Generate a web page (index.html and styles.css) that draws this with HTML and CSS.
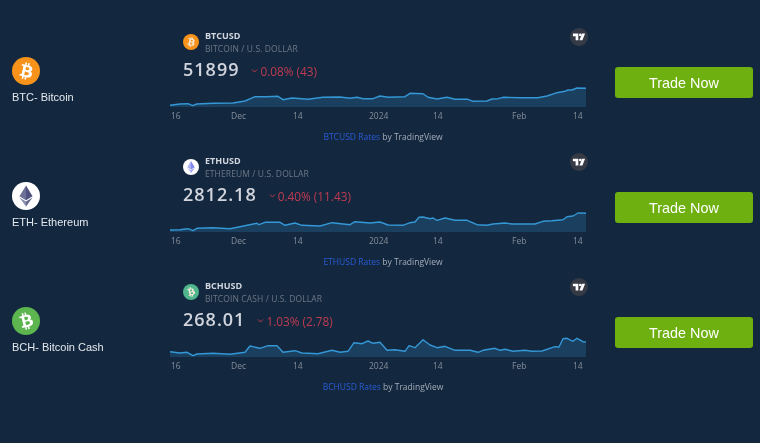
FILE: index.html
```html
<!DOCTYPE html>
<html lang="en">
<head>
<meta charset="utf-8">
<title>Trade Now</title>
<link rel="stylesheet" href="styles.css">
</head>
<body>
<svg class="defs" width="0" height="0" aria-hidden="true">
  <defs>
    <path id="btc" d="M23.189 14.02c.314-2.096-1.283-3.223-3.465-3.975l.708-2.84-1.728-.43-.69 2.765c-.454-.114-.92-.22-1.385-.326l.695-2.783L15.596 6l-.708 2.839c-.376-.086-.746-.17-1.104-.26l.002-.009-2.384-.595-.46 1.846s1.283.294 1.256.312c.7.175.826.638.805 1.006l-.806 3.235c.048.012.11.03.18.057l-.183-.045-1.13 4.532c-.086.212-.303.531-.793.41.018.025-1.256-.313-1.256-.313l-.858 1.978 2.25.561c.418.105.828.215 1.231.318l-.715 2.872 1.727.43.708-2.84c.472.127.93.245 1.378.357l-.706 2.828 1.728.43.715-2.866c2.948.558 5.164.333 6.097-2.333.752-2.146-.037-3.385-1.588-4.192 1.13-.26 1.98-1.003 2.207-2.538zm-3.95 5.538c-.533 2.147-4.148.986-5.32.695l.95-3.805c1.172.293 4.929.872 4.37 3.11zm.535-5.569c-.487 1.953-3.495.96-4.47.717l.86-3.45c.975.243 4.118.696 3.61 2.733z"/>
    <g id="eth">
      <path class="eth-a" d="M16 4 8.5 16.3 16 20.8z"/>
      <path class="eth-b" d="M16 4l7.5 12.3L16 20.8z"/>
      <path class="eth-c" d="M8.5 17.8 16 28v-5.8z"/>
      <path class="eth-d" d="M23.5 17.8 16 28v-5.8z"/>
    </g>
    <g id="tv">
      <path d="M14 6H2v6h6v9h6z"/>
      <circle cx="18.5" cy="9" r="3"/>
      <path d="M22.5 6H29l-6 15h-6.5z"/>
    </g>
    <path id="chev" d="M1 1.5 3.5 4 6 1.5"/>
    <g id="axis">
      <text x="171" y="119">16</text>
      <text x="231" y="119">Dec</text>
      <text x="293" y="119">14</text>
      <text x="369" y="119">2024</text>
      <text x="433" y="119">14</text>
      <text x="512" y="119">Feb</text>
      <text x="573" y="119">14</text>
    </g>
  </defs>
</svg>

<main class="list">
  <section class="row">
    <div class="coin">
      <svg class="coin-icon" viewBox="0 0 32 32"><circle class="c-btc" cx="16" cy="16" r="16"/><use class="glyph" href="#btc"/></svg>
      <p class="coin-name">BTC- Bitcoin</p>
    </div>
    <div class="widget">
      <div class="head">
        <svg class="mini-icon" viewBox="0 0 32 32"><circle class="c-btc" cx="16" cy="16" r="16"/><use class="glyph-soft" href="#btc"/></svg>
        <div>
          <div class="symbol">BTCUSD</div>
          <div class="pair">BITCOIN / U.S. DOLLAR</div>
        </div>
      </div>
      <svg class="tv" viewBox="-4.5 -6.5 40 40"><circle class="tv-bg" cx="15.5" cy="13.5" r="20"/><use class="tv-mark" href="#tv"/></svg>
      <div class="quote">
        <span class="price">51899</span>
        <svg class="chev" viewBox="0 0 7 5"><use href="#chev"/></svg>
        <span class="change">0.08% (43)</span>
      </div>
      <svg class="chart" viewBox="170 80 416 42">
        <polygon class="area" points="170,107 170,105.3 180,104 188,103.7 192.7,105.7 196.7,104 213,103.3 233,103 245,101 255,96.7 266.7,96.7 278,96.3 283,99.7 292,98 308,99.3 323,97.3 340,97 350,98.3 357,97.3 363,98.7 373,98.7 380,96 388,97.3 405,96.7 410,93.3 423,93.7 428,97.3 437,99 447,97.3 455,99.3 468,99.3 473,101.3 487,101 492,99 498,98.7 503,97.3 520,97.7 538,97.7 547,96 557,92.7 565,91.3 568,90 572,90 577,88 586,88.3 586,107"/>
        <polyline class="line" points="170,105.3 180,104 188,103.7 192.7,105.7 196.7,104 213,103.3 233,103 245,101 255,96.7 266.7,96.7 278,96.3 283,99.7 292,98 308,99.3 323,97.3 340,97 350,98.3 357,97.3 363,98.7 373,98.7 380,96 388,97.3 405,96.7 410,93.3 423,93.7 428,97.3 437,99 447,97.3 455,99.3 468,99.3 473,101.3 487,101 492,99 498,98.7 503,97.3 520,97.7 538,97.7 547,96 557,92.7 565,91.3 568,90 572,90 577,88 586,88.3"/>
        <use class="axis" href="#axis"/>
      </svg>
      <p class="credit"><a class="credit-link" href="#">BTCUSD Rates</a> by TradingView</p>
    </div>
    <a class="trade" href="#">Trade Now</a>
  </section>

  <section class="row">
    <div class="coin">
      <svg class="coin-icon" viewBox="0 0 32 32"><circle class="c-white" cx="16" cy="16" r="16"/><use class="eth-dark" href="#eth"/></svg>
      <p class="coin-name">ETH- Ethereum</p>
    </div>
    <div class="widget">
      <div class="head">
        <svg class="mini-icon" viewBox="0 0 32 32"><circle class="c-white" cx="16" cy="16" r="16"/><use class="eth-light" href="#eth"/></svg>
        <div>
          <div class="symbol">ETHUSD</div>
          <div class="pair">ETHEREUM / U.S. DOLLAR</div>
        </div>
      </div>
      <svg class="tv" viewBox="-4.5 -6.5 40 40"><circle class="tv-bg" cx="15.5" cy="13.5" r="20"/><use class="tv-mark" href="#tv"/></svg>
      <div class="quote">
        <span class="price">2812.18</span>
        <svg class="chev" viewBox="0 0 7 5"><use href="#chev"/></svg>
        <span class="change">0.40% (11.43)</span>
      </div>
      <svg class="chart" viewBox="170 80 416 42">
        <polygon class="area" points="170,107 170,105 180,104.7 188,103.7 193,105.7 197,103.3 213,102.7 230,103.7 240,101.7 257,98.3 259,99.7 265,97.3 280,97.3 285,100.3 295,98 302,100.3 320,101 332,97.7 350,99.7 355,96.7 370,98 380,97 388,100 403,100.3 410,97.7 415,97 419,92.3 423,92 430,93.7 433,93 437,95.3 445,93 455,95.3 467,95.3 477,99.7 487,100.3 493,99 505,98 512,99 535,99 543,96.3 552,95.7 563,94.7 567,91.7 573,91 578,88 586,88.3 586,107"/>
        <polyline class="line" points="170,105 180,104.7 188,103.7 193,105.7 197,103.3 213,102.7 230,103.7 240,101.7 257,98.3 259,99.7 265,97.3 280,97.3 285,100.3 295,98 302,100.3 320,101 332,97.7 350,99.7 355,96.7 370,98 380,97 388,100 403,100.3 410,97.7 415,97 419,92.3 423,92 430,93.7 433,93 437,95.3 445,93 455,95.3 467,95.3 477,99.7 487,100.3 493,99 505,98 512,99 535,99 543,96.3 552,95.7 563,94.7 567,91.7 573,91 578,88 586,88.3"/>
        <use class="axis" href="#axis"/>
      </svg>
      <p class="credit"><a class="credit-link" href="#">ETHUSD Rates</a> by TradingView</p>
    </div>
    <a class="trade" href="#">Trade Now</a>
  </section>

  <section class="row">
    <div class="coin">
      <svg class="coin-icon" viewBox="0 0 32 32"><circle class="c-bch" cx="16" cy="16" r="16"/><use class="glyph tilt" href="#btc"/></svg>
      <p class="coin-name">BCH- Bitcoin Cash</p>
    </div>
    <div class="widget">
      <div class="head">
        <svg class="mini-icon" viewBox="0 0 32 32"><circle class="c-bch-soft" cx="16" cy="16" r="16"/><use class="glyph-soft tilt" href="#btc"/></svg>
        <div>
          <div class="symbol">BCHUSD</div>
          <div class="pair">BITCOIN CASH / U.S. DOLLAR</div>
        </div>
      </div>
      <svg class="tv" viewBox="-4.5 -6.5 40 40"><circle class="tv-bg" cx="15.5" cy="13.5" r="20"/><use class="tv-mark" href="#tv"/></svg>
      <div class="quote">
        <span class="price">268.01</span>
        <svg class="chev" viewBox="0 0 7 5"><use href="#chev"/></svg>
        <span class="change">1.03% (2.78)</span>
      </div>
      <svg class="chart" viewBox="170 80 416 42">
        <polygon class="area" points="170,107 170,101.7 180,103 187,102.3 193,105.7 197,104 213,103.3 230,104.3 245,102.3 250,96 260,98.3 268,95.7 277,95.7 283,102.3 295,100.7 302,103 318,103.7 332,100.3 340,102.3 348,101.3 354,92.7 362,93.7 368,91 373,93.3 380,92.3 387,100.3 395,99.7 405,101.3 409,95.7 415,97.7 423,89.7 430,95 437,97.7 445,96.3 455,100.3 470,100.3 478,102.3 483,100.3 495,98.3 500,100.3 505,99.3 513,101.3 525,100.3 532,101.3 542,101 555,96.7 559,97 563,88.7 567,88.3 573,91.3 577,88.3 583,91.7 586,92 586,107"/>
        <polyline class="line" points="170,101.7 180,103 187,102.3 193,105.7 197,104 213,103.3 230,104.3 245,102.3 250,96 260,98.3 268,95.7 277,95.7 283,102.3 295,100.7 302,103 318,103.7 332,100.3 340,102.3 348,101.3 354,92.7 362,93.7 368,91 373,93.3 380,92.3 387,100.3 395,99.7 405,101.3 409,95.7 415,97.7 423,89.7 430,95 437,97.7 445,96.3 455,100.3 470,100.3 478,102.3 483,100.3 495,98.3 500,100.3 505,99.3 513,101.3 525,100.3 532,101.3 542,101 555,96.7 559,97 563,88.7 567,88.3 573,91.3 577,88.3 583,91.7 586,92"/>
        <use class="axis" href="#axis"/>
      </svg>
      <p class="credit"><a class="credit-link" href="#">BCHUSD Rates</a> by TradingView</p>
    </div>
    <a class="trade" href="#">Trade Now</a>
  </section>
</main>
</body>
</html>
```
FILE: styles.css
```css
* { box-sizing: border-box; }

html, body {
  margin: 0;
  height: 100%;
  overflow: hidden;
  background: #13283f;
}

.defs { position: absolute; }

.list {
  padding-top: 25px;
  filter: blur(.3px);
}

.row {
  display: grid;
  grid-template-columns: 170px 445px 138px;
  height: 125px;
}

/* left column */
.coin {
  padding: 32px 0 0 12px;
}

.coin-icon {
  display: block;
  width: 28px;
  height: 28px;
}

.coin-name {
  margin: 6px 0 0;
  font: 11px/13px "Liberation Sans", Arial, sans-serif;
  color: #e4e8ed;
}

.c-btc { fill: #f7931a; }
.c-white { fill: #fff; }
.c-bch { fill: #5cb54f; }
.c-bch-soft { fill: #4fb58c; }

.glyph { fill: #fff; }
.glyph-soft { fill: #f5e9d6; }
.tilt { transform: rotate(-28deg); transform-origin: 16px 16px; }

.eth-a { fill: var(--eth-a); }
.eth-b { fill: var(--eth-b); }
.eth-c { fill: var(--eth-c); }
.eth-d { fill: var(--eth-d); }

.eth-dark {
  --eth-a: #6d7097;
  --eth-b: #50537f;
  --eth-c: #8a8db0;
  --eth-d: #63668f;
}

.eth-light {
  --eth-a: #a7aef5;
  --eth-b: #8188ee;
  --eth-c: #bcc2f7;
  --eth-d: #98a0f2;
}

/* tradingview widget */
.widget {
  position: relative;
  width: 426px;
  font-family: "Open Sans", "DejaVu Sans", sans-serif;
}

.head {
  display: flex;
  align-items: flex-start;
  gap: 6px;
  padding: 4px 0 0 13px;
}

.mini-icon {
  display: block;
  width: 16px;
  height: 16px;
  margin-top: 5px;
}

.symbol {
  font-size: 9px;
  line-height: 13px;
  font-weight: 700;
  color: #d1d5dd;
}

.pair {
  font-size: 8.5px;
  line-height: 13px;
  letter-spacing: .1px;
  color: #6d7785;
}

.tv {
  position: absolute;
  top: 3px;
  left: 400px;
  width: 18px;
  height: 18px;
}

.tv-bg { fill: #363a45; }
.tv-mark { fill: #fff; }

.quote {
  display: flex;
  align-items: center;
  height: 23px;
  margin-top: 2px;
  padding-left: 13px;
}

.price {
  font-size: 18px;
  font-weight: 600;
  letter-spacing: 1px;
  color: #d1d4dc;
}

.chev {
  width: 7px;
  height: 5px;
  margin: 4px 2px 0 12px;
  fill: none;
  stroke: #c23a4e;
  stroke-width: 1;
}

.change {
  margin-top: 4px;
  font-size: 11.8px;
  color: #c03a50;
}

.chart {
  display: block;
  width: 416px;
  height: 42px;
}

.area { fill: #1a3f5f; }
.line { fill: none; stroke: #3497d6; stroke-width: 1.4; stroke-linejoin: round; }
.axis { font: 8.5px "Open Sans", sans-serif; fill: #858d9a; }

.credit {
  margin: 9px 0 0;
  text-align: center;
  font-size: 8.5px;
  line-height: 12px;
  color: #a4acb9;
}

.credit-link {
  color: #2a5bd7;
  text-decoration: none;
}

/* call to action */
.trade {
  display: flex;
  align-items: center;
  justify-content: center;
  height: 31px;
  margin-top: 42px;
  border-radius: 3px;
  background: #6eb00f;
  color: #fff;
  font: 14.4px "Liberation Sans", Arial, sans-serif;
  text-decoration: none;
}
```
